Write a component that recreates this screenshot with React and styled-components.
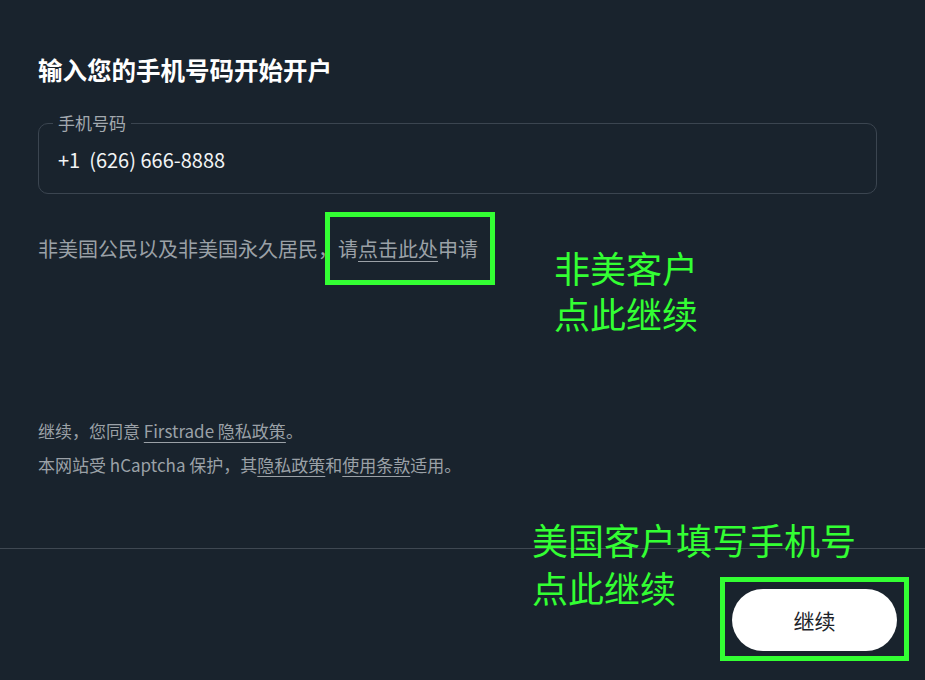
import React from "react";
import styled, { createGlobalStyle } from "styled-components";

const GlobalStyle = createGlobalStyle`
  html, body {
    margin: 0;
    padding: 0;
    background: #19232d;
  }
  body {
    font-family: "Noto Sans CJK SC", "Noto Sans", sans-serif;
    color: #ffffff;
  }
  * { box-sizing: border-box; }
`;

const Page = styled.div`
  position: relative;
  min-height: 100vh;
  display: flex;
  flex-direction: column;
`;

const Main = styled.main`
  flex: 1;
  padding: 50px 48px 0 38px;
  display: flex;
  flex-direction: column;
`;

const Title = styled.h1`
  margin: 0;
  font-size: 24.5px;
  line-height: 40px;
  font-weight: 700;
  color: #ffffff;
`;

const Field = styled.fieldset`
  margin: 23px 0 0;
  padding: 13px 19px 19px;
  border: 1px solid #3b4550;
  border-radius: 10px;
  min-width: 0;
`;

const Legend = styled.legend`
  margin-left: -5px;
  padding: 0 5px;
  font-size: 17px;
  line-height: 20px;
  color: #a3a9af;
`;

const Value = styled.div`
  font-size: 20px;
  line-height: 28px;
  color: #f2f4f5;
  white-space: pre;
`;

const Notice = styled.p`
  margin: 40px 0 0;
  font-size: 20px;
  line-height: 30px;
  color: #9ba1a7;
`;

const Marked = styled.span`
  position: relative;
  &::after {
    content: "";
    position: absolute;
    left: -13px;
    right: -17px;
    top: -22px;
    bottom: -22px;
    border: 5px solid #33ff33;
    pointer-events: none;
  }
`;

const Link = styled.a`
  color: inherit;
  text-decoration: underline;
  text-underline-offset: 4px;
  text-decoration-thickness: 1px;
`;

const Legal = styled.div`
  margin-top: 150px;
  font-size: 17px;
  line-height: 34px;
  color: #9ba1a7;
`;

const Footer = styled.footer`
  border-top: 1px solid #3f4852;
  padding: 40px 28px 29px;
  display: flex;
  justify-content: flex-end;
`;

const ButtonWrap = styled.div`
  position: relative;
  &::after {
    content: "";
    position: absolute;
    inset: -12px -12px -10px -12px;
    border: 5px solid #33ff33;
    pointer-events: none;
  }
`;

const Button = styled.button`
  width: 165px;
  height: 62px;
  border: none;
  border-radius: 31px;
  background: #ffffff;
  color: #1d2329;
  font-family: inherit;
  font-size: 21px;
  cursor: pointer;
`;

const Annotation = styled.div`
  position: absolute;
  left: ${(p) => p.$x}px;
  top: ${(p) => p.$y}px;
  display: flex;
  flex-direction: column;
  align-items: flex-start;
  font-size: 36px;
  line-height: ${(p) => p.$lh}px;
  color: #33ff33;
  white-space: nowrap;
  pointer-events: none;
`;

const AnnotationLine = styled.span`
  display: block;
`;

export default function App() {
  return (
    <>
      <GlobalStyle />
      <Page>
        <Main>
          <Title>输入您的手机号码开始开户</Title>
          <Field>
            <Legend>手机号码</Legend>
            <Value>{"+1  (626) 666-8888"}</Value>
          </Field>
          <Notice>
            非美国公民以及非美国永久居民，
            <Marked>
              请<Link href="#">点击此处</Link>申请
            </Marked>
          </Notice>
          <Legal>
            <div>
              继续，您同意 <Link href="#">Firstrade 隐私政策</Link>。
            </div>
            <div>
              本网站受 hCaptcha 保护，其<Link href="#">隐私政策</Link>和
              <Link href="#">使用条款</Link>适用。
            </div>
          </Legal>
        </Main>
        <Footer>
          <ButtonWrap>
            <Button>继续</Button>
          </ButtonWrap>
        </Footer>
        <Annotation $x={554} $y={244} $lh={46}>
          <AnnotationLine>非美客户</AnnotationLine>
          <AnnotationLine>点此继续</AnnotationLine>
        </Annotation>
        <Annotation $x={532} $y={515} $lh={48}>
          <AnnotationLine>美国客户填写手机号</AnnotationLine>
          <AnnotationLine>点此继续</AnnotationLine>
        </Annotation>
      </Page>
    </>
  );
}
